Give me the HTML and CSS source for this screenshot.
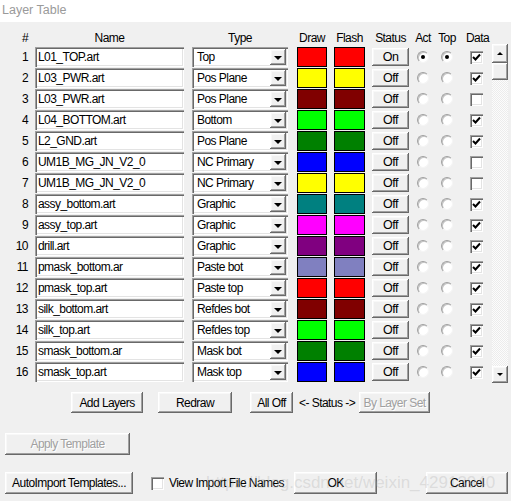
FILE: index.html
```html
<!DOCTYPE html>
<html>
<head>
<meta charset="utf-8">
<title>Layer Table</title>
<link rel="stylesheet" href="styles.css">
</head>
<body>
<div class="titlebar">Layer Table</div>
<div class="table-area">
  <div class="grid">
    <div class="hd num">#</div>
    <div class="hd w-name">Name</div>
    <div class="hd w-type">Type</div>
    <div class="hd w-draw">Draw</div>
    <div class="hd w-flash">Flash</div>
    <div class="hd w-status">Status</div>
    <div class="hd w-radio">Act</div>
    <div class="hd w-radio">Top</div>
    <div class="hd hd-data">Data</div>

    <div class="num">1</div><div class="txt sunken">L01_TOP.art</div><div class="combo sunken"><span class="ctext">Top</span><span class="arrow raised"></span></div><div class="sw c-red"></div><div class="sw c-red"></div><div class="stbtn raised">On</div><div class="rcell"><span class="radio on"></span></div><div class="rcell"><span class="radio on"></span></div><div class="dcell"><span class="chk sunken"><svg viewBox="0 0 13 13" width="13" height="13"><polyline points="3,6 5.5,8.5 10,3.5" fill="none" stroke="#000" stroke-width="2"/></svg></span></div>

    <div class="num">2</div><div class="txt sunken">L03_PWR.art</div><div class="combo sunken"><span class="ctext">Pos Plane</span><span class="arrow raised"></span></div><div class="sw c-yellow"></div><div class="sw c-yellow"></div><div class="stbtn raised">Off</div><div class="rcell"><span class="radio"></span></div><div class="rcell"><span class="radio"></span></div><div class="dcell"><span class="chk sunken"><svg viewBox="0 0 13 13" width="13" height="13"><polyline points="3,6 5.5,8.5 10,3.5" fill="none" stroke="#000" stroke-width="2"/></svg></span></div>

    <div class="num">3</div><div class="txt sunken">L03_PWR.art</div><div class="combo sunken"><span class="ctext">Pos Plane</span><span class="arrow raised"></span></div><div class="sw c-maroon"></div><div class="sw c-maroon"></div><div class="stbtn raised">Off</div><div class="rcell"><span class="radio"></span></div><div class="rcell"><span class="radio"></span></div><div class="dcell"><span class="chk sunken"></span></div>

    <div class="num">4</div><div class="txt sunken">L04_BOTTOM.art</div><div class="combo sunken"><span class="ctext">Bottom</span><span class="arrow raised"></span></div><div class="sw c-lime"></div><div class="sw c-lime"></div><div class="stbtn raised">Off</div><div class="rcell"><span class="radio"></span></div><div class="rcell"><span class="radio"></span></div><div class="dcell"><span class="chk sunken"><svg viewBox="0 0 13 13" width="13" height="13"><polyline points="3,6 5.5,8.5 10,3.5" fill="none" stroke="#000" stroke-width="2"/></svg></span></div>

    <div class="num">5</div><div class="txt sunken">L2_GND.art</div><div class="combo sunken"><span class="ctext">Pos Plane</span><span class="arrow raised"></span></div><div class="sw c-green"></div><div class="sw c-green"></div><div class="stbtn raised">Off</div><div class="rcell"><span class="radio"></span></div><div class="rcell"><span class="radio"></span></div><div class="dcell"><span class="chk sunken"><svg viewBox="0 0 13 13" width="13" height="13"><polyline points="3,6 5.5,8.5 10,3.5" fill="none" stroke="#000" stroke-width="2"/></svg></span></div>

    <div class="num">6</div><div class="txt sunken">UM1B_MG_JN_V2_0</div><div class="combo sunken"><span class="ctext">NC Primary</span><span class="arrow raised"></span></div><div class="sw c-blue"></div><div class="sw c-blue"></div><div class="stbtn raised">Off</div><div class="rcell"><span class="radio"></span></div><div class="rcell"><span class="radio"></span></div><div class="dcell"><span class="chk sunken"></span></div>

    <div class="num">7</div><div class="txt sunken">UM1B_MG_JN_V2_0</div><div class="combo sunken"><span class="ctext">NC Primary</span><span class="arrow raised"></span></div><div class="sw c-yellow"></div><div class="sw c-yellow"></div><div class="stbtn raised">Off</div><div class="rcell"><span class="radio"></span></div><div class="rcell"><span class="radio"></span></div><div class="dcell"><span class="chk sunken"></span></div>

    <div class="num">8</div><div class="txt sunken">assy_bottom.art</div><div class="combo sunken"><span class="ctext">Graphic</span><span class="arrow raised"></span></div><div class="sw c-teal"></div><div class="sw c-teal"></div><div class="stbtn raised">Off</div><div class="rcell"><span class="radio"></span></div><div class="rcell"><span class="radio"></span></div><div class="dcell"><span class="chk sunken"><svg viewBox="0 0 13 13" width="13" height="13"><polyline points="3,6 5.5,8.5 10,3.5" fill="none" stroke="#000" stroke-width="2"/></svg></span></div>

    <div class="num">9</div><div class="txt sunken">assy_top.art</div><div class="combo sunken"><span class="ctext">Graphic</span><span class="arrow raised"></span></div><div class="sw c-magenta"></div><div class="sw c-magenta"></div><div class="stbtn raised">Off</div><div class="rcell"><span class="radio"></span></div><div class="rcell"><span class="radio"></span></div><div class="dcell"><span class="chk sunken"><svg viewBox="0 0 13 13" width="13" height="13"><polyline points="3,6 5.5,8.5 10,3.5" fill="none" stroke="#000" stroke-width="2"/></svg></span></div>

    <div class="num">10</div><div class="txt sunken">drill.art</div><div class="combo sunken"><span class="ctext">Graphic</span><span class="arrow raised"></span></div><div class="sw c-purple"></div><div class="sw c-purple"></div><div class="stbtn raised">Off</div><div class="rcell"><span class="radio"></span></div><div class="rcell"><span class="radio"></span></div><div class="dcell"><span class="chk sunken"><svg viewBox="0 0 13 13" width="13" height="13"><polyline points="3,6 5.5,8.5 10,3.5" fill="none" stroke="#000" stroke-width="2"/></svg></span></div>

    <div class="num">11</div><div class="txt sunken">pmask_bottom.ar</div><div class="combo sunken"><span class="ctext">Paste bot</span><span class="arrow raised"></span></div><div class="sw c-slate"></div><div class="sw c-slate"></div><div class="stbtn raised">Off</div><div class="rcell"><span class="radio"></span></div><div class="rcell"><span class="radio"></span></div><div class="dcell"><span class="chk sunken"><svg viewBox="0 0 13 13" width="13" height="13"><polyline points="3,6 5.5,8.5 10,3.5" fill="none" stroke="#000" stroke-width="2"/></svg></span></div>

    <div class="num">12</div><div class="txt sunken">pmask_top.art</div><div class="combo sunken"><span class="ctext">Paste top</span><span class="arrow raised"></span></div><div class="sw c-red"></div><div class="sw c-red"></div><div class="stbtn raised">Off</div><div class="rcell"><span class="radio"></span></div><div class="rcell"><span class="radio"></span></div><div class="dcell"><span class="chk sunken"><svg viewBox="0 0 13 13" width="13" height="13"><polyline points="3,6 5.5,8.5 10,3.5" fill="none" stroke="#000" stroke-width="2"/></svg></span></div>

    <div class="num">13</div><div class="txt sunken">silk_bottom.art</div><div class="combo sunken"><span class="ctext">Refdes bot</span><span class="arrow raised"></span></div><div class="sw c-maroon"></div><div class="sw c-maroon"></div><div class="stbtn raised">Off</div><div class="rcell"><span class="radio"></span></div><div class="rcell"><span class="radio"></span></div><div class="dcell"><span class="chk sunken"><svg viewBox="0 0 13 13" width="13" height="13"><polyline points="3,6 5.5,8.5 10,3.5" fill="none" stroke="#000" stroke-width="2"/></svg></span></div>

    <div class="num">14</div><div class="txt sunken">silk_top.art</div><div class="combo sunken"><span class="ctext">Refdes top</span><span class="arrow raised"></span></div><div class="sw c-lime"></div><div class="sw c-lime"></div><div class="stbtn raised">Off</div><div class="rcell"><span class="radio"></span></div><div class="rcell"><span class="radio"></span></div><div class="dcell"><span class="chk sunken"><svg viewBox="0 0 13 13" width="13" height="13"><polyline points="3,6 5.5,8.5 10,3.5" fill="none" stroke="#000" stroke-width="2"/></svg></span></div>

    <div class="num">15</div><div class="txt sunken">smask_bottom.ar</div><div class="combo sunken"><span class="ctext">Mask bot</span><span class="arrow raised"></span></div><div class="sw c-green"></div><div class="sw c-green"></div><div class="stbtn raised">Off</div><div class="rcell"><span class="radio"></span></div><div class="rcell"><span class="radio"></span></div><div class="dcell"><span class="chk sunken"><svg viewBox="0 0 13 13" width="13" height="13"><polyline points="3,6 5.5,8.5 10,3.5" fill="none" stroke="#000" stroke-width="2"/></svg></span></div>

    <div class="num">16</div><div class="txt sunken">smask_top.art</div><div class="combo sunken"><span class="ctext">Mask top</span><span class="arrow raised"></span></div><div class="sw c-blue"></div><div class="sw c-blue"></div><div class="stbtn raised">Off</div><div class="rcell"><span class="radio"></span></div><div class="rcell"><span class="radio"></span></div><div class="dcell"><span class="chk sunken"><svg viewBox="0 0 13 13" width="13" height="13"><polyline points="3,6 5.5,8.5 10,3.5" fill="none" stroke="#000" stroke-width="2"/></svg></span></div>
  </div>
  <div class="scroll">
    <div class="sb-up raised"><span class="tri-up"></span></div>
    <div class="sb-thumb raised"></div>
    <div class="sb-track"></div>
    <div class="sb-down raised"><span class="tri-down"></span></div>
  </div>
</div>

<div class="btnrow">
  <div class="btn raised b-add">Add Layers</div>
  <div class="btn raised b-redraw">Redraw</div>
  <div class="btn raised b-alloff">All Off</div>
  <div class="status-lbl">&lt;- Status -&gt;</div>
  <div class="btn raised disabled b-layerset">By Layer Set</div>
</div>

<div class="applyrow">
  <div class="btn raised disabled b-apply">Apply Template</div>
</div>

<div class="footer">
  <div class="btn raised b-auto">AutoImport Templates...</div>
  <div class="viewchk"><span class="chk sunken"></span><span class="viewlbl">View Import File Names</span></div>
  <div class="btn raised b-ok">OK</div>
  <div class="btn raised b-cancel">Cancel</div>
</div>

<div class="watermark">https://blog.csdn.net/weixin_42913940</div>
</body>
</html>
```

FILE: styles.css
```css
* { box-sizing: border-box; }

body {
  margin: 0;
  width: 511px;
  height: 501px;
  overflow: hidden;
  position: relative;
  background: #f0f0f0;
  color: #000;
  font-family: "Liberation Sans", Arial, sans-serif;
  font-size: 12px;
  letter-spacing: -0.55px;
}

.sunken {
  background: #fff;
  box-shadow: inset 1px 1px 0 #a0a0a0, inset 2px 2px 0 #696969,
              inset -1px -1px 0 #fff, inset -2px -2px 0 #e3e3e3;
}

.raised {
  background: #f0f0f0;
  box-shadow: inset -1px -1px 0 #696969, inset 1px 1px 0 #fff,
              inset -2px -2px 0 #a0a0a0, inset 2px 2px 0 #f8f8f8;
}

.titlebar {
  height: 22px;
  background: #fff;
  color: #9a9a9a;
  line-height: 20px;
  padding-left: 2px;
  font-size: 12.5px;
  letter-spacing: 0;
}

.table-area {
  display: flex;
  margin-top: 8px;
}

.grid {
  display: grid;
  grid-template-columns: 35px 157px 105px 37px 38px 39px 24px 24px 33px;
  grid-template-rows: 17px repeat(16, 21px);
  align-items: start;
}

.hd {
  line-height: 16px;
  text-align: center;
  white-space: nowrap;
}
.w-name { width: 149px; }
.w-type { width: 96px; }
.w-draw { width: 30px; }
.w-flash { width: 31px; }
.w-status { width: 37px; }
.w-radio { width: 24px; }
.hd-data { text-align: left; padding-left: 7px; }

.num {
  text-align: right;
  padding-right: 7px;
  line-height: 20px;
}
.hd.num { line-height: 16px; text-align: right; }

.txt {
  width: 149px;
  height: 20px;
  padding: 2px 2px 0 3px;
  line-height: 16px;
  white-space: nowrap;
  overflow: hidden;
}

.combo {
  width: 96px;
  height: 20px;
  padding: 2px;
  display: flex;
}
.ctext {
  flex: 1;
  padding-left: 3px;
  line-height: 16px;
  white-space: nowrap;
  overflow: hidden;
}
.arrow {
  width: 16px;
  height: 16px;
  display: flex;
  align-items: center;
  justify-content: center;
  padding-top: 1px;
}
.arrow::after {
  content: "";
  width: 0;
  height: 0;
  border-left: 4px solid transparent;
  border-right: 4px solid transparent;
  border-top: 4px solid #000;
}

.sw {
  width: 30px;
  height: 20px;
  border: 1px solid #000;
}
.sw + .sw { width: 31px; }
.c-red { background: #ff0000; }
.c-yellow { background: #ffff00; }
.c-maroon { background: #800000; }
.c-lime { background: #00ff00; }
.c-green { background: #008000; }
.c-blue { background: #0000ff; }
.c-teal { background: #008080; }
.c-magenta { background: #ff00ff; }
.c-purple { background: #800080; }
.c-slate { background: #8080c0; }

.stbtn {
  width: 37px;
  height: 18px;
  margin-top: 1px;
  text-align: center;
  line-height: 18px;
  font-size: 12.5px;
}

.rcell {
  height: 20px;
  display: flex;
  align-items: center;
  justify-content: center;
}
.radio {
  width: 12px;
  height: 12px;
  border-radius: 50%;
  background: #fff;
  border: 1px solid;
  border-color: #a0a0a0 #f4f4f4 #f4f4f4 #a0a0a0;
  box-shadow: inset 1px 1px 0 #c4c4c4;
  display: flex;
  align-items: center;
  justify-content: center;
}
.radio.on::after {
  content: "";
  width: 4px;
  height: 4px;
  border-radius: 50%;
  background: #000;
}

.dcell {
  height: 20px;
  padding-left: 11px;
  display: flex;
  align-items: center;
}
.chk {
  width: 13px;
  height: 13px;
  display: block;
}
.chk svg { display: block; }

.scroll {
  margin-top: 14px;
  width: 16px;
  height: 339px;
  display: flex;
  flex-direction: column;
  background-color: #f0f0f0;
  background-image: repeating-conic-gradient(#fcfcfc 0 25%, #ececec 0 50%);
  background-size: 2px 2px;
}
.sb-up { height: 19px; display: flex; align-items: center; justify-content: center; }
.sb-thumb { height: 17px; }
.sb-track { flex: 1; }
.sb-down { height: 17px; display: flex; align-items: center; justify-content: center; }
.tri-up {
  width: 0; height: 0;
  border-left: 3px solid transparent;
  border-right: 3px solid transparent;
  border-bottom: 3px solid #000;
}
.tri-down {
  width: 0; height: 0;
  border-left: 3px solid transparent;
  border-right: 3px solid transparent;
  border-top: 3px solid #000;
}

.btn {
  display: flex;
  align-items: center;
  justify-content: center;
  white-space: nowrap;
}
.btn.disabled {
  color: #a0a0a0;
  text-shadow: 1px 1px 0 #fff;
}

.btnrow {
  display: flex;
  align-items: center;
  margin-top: 9px;
  height: 21px;
}
.btnrow .btn { height: 21px; }
.b-add { margin-left: 71px; width: 72px; }
.b-redraw { margin-left: 15px; width: 74px; }
.b-alloff { margin-left: 18px; width: 43px; }
.status-lbl { margin-left: 6px; width: 54px; white-space: nowrap; }
.b-layerset { margin-left: 6px; width: 71px; }

.applyrow {
  margin-top: 20px;
  padding-left: 5px;
}
.b-apply { width: 125px; height: 22px; }

.footer {
  display: flex;
  align-items: center;
  margin-top: 17px;
  height: 22px;
}
.footer .btn { height: 22px; }
.b-auto { margin-left: 5px; width: 128px; }
.viewchk {
  margin-left: 18px;
  width: 143px;
  display: flex;
  align-items: center;
}
.viewlbl { margin-left: 5px; white-space: nowrap; }
.b-ok { width: 83px; }
.b-cancel { margin-left: 49px; width: 82px; }

.watermark {
  position: absolute;
  left: 206px;
  top: 473px;
  font-size: 17px;
  letter-spacing: 0;
  color: rgba(170, 170, 170, 0.3);
  white-space: nowrap;
  pointer-events: none;
}
```
